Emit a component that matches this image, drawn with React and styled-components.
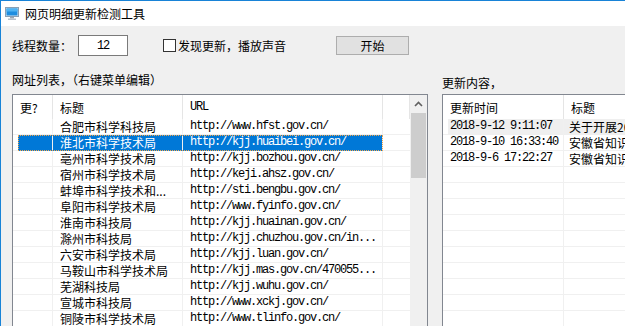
import React from "react";
import styled, { createGlobalStyle } from "styled-components";

const urlRows = [
  ["合肥市科学科技局", "http://www.hfst.gov.cn/"],
  ["淮北市科学技术局", "http://kjj.huaibei.gov.cn/"],
  ["亳州市科学技术局", "http://kjj.bozhou.gov.cn/"],
  ["宿州市科学技术局", "http://keji.ahsz.gov.cn/"],
  ["蚌埠市科学技术和...", "http://sti.bengbu.gov.cn/"],
  ["阜阳市科学技术局", "http://www.fyinfo.gov.cn/"],
  ["淮南市科技局", "http://kjj.huainan.gov.cn/"],
  ["滁州市科技局", "http://kjj.chuzhou.gov.cn/in..."],
  ["六安市科学技术局", "http://kjj.luan.gov.cn/"],
  ["马鞍山市科学技术局", "http://kjj.mas.gov.cn/470055..."],
  ["芜湖科技局", "http://kjj.wuhu.gov.cn/"],
  ["宣城市科技局", "http://www.xckj.gov.cn/"],
  ["铜陵市科学技术局", "http://www.tlinfo.gov.cn/"],
];

const updates = [
  ["2018-9-12 9:11:07", "关于开展2018年度知识产权工作的通知"],
  ["2018-9-10 16:33:40", "安徽省知识产权局关于公布名单的通知"],
  ["2018-9-6 17:22:27", "安徽省知识产权局关于组织申报的通知"],
];

const SELECTED = 1;

export default function App() {
  return (
    <Window>
      <GlobalStyle />
      <TitleBar>
        <svg width="14" height="13" viewBox="0 0 14 13">
          <rect x="0.5" y="0.5" width="13" height="9" fill="#d8e4ee" stroke="#8aa0b4" />
          <rect x="1.5" y="1.5" width="11" height="7" fill="#1e8ee0" />
          <rect x="1.5" y="1.5" width="11" height="3" fill="#4fb3f2" />
          <rect x="5" y="10" width="4" height="1.5" fill="#9aa8b4" />
          <rect x="3" y="11.5" width="8" height="1.5" fill="#b8c2cc" />
        </svg>
        <Title>网页明细更新检测工具</Title>
      </TitleBar>
      <Body>
        <Toolbar>
          <FieldLabel>线程数量：</FieldLabel>
          <NumberBox>12</NumberBox>
          <CheckRow>
            <CheckBox />
            <span>发现更新，播放声音</span>
          </CheckRow>
          <Button>开始</Button>
        </Toolbar>
        <Sections>
          <Section $width={416}>
            <Caption $top={0}>网址列表，（右键菜单编辑）</Caption>
            <Panel>
              <Table>
                <HeaderRow>
                  <HeadCell $w={40}>更?</HeadCell>
                  <HeadCell $w={130}>标题</HeadCell>
                  <HeadCell $w={200} $mono>URL</HeadCell>
                  <HeadCell $w={27} />
                </HeaderRow>
                {urlRows.map(([name, url], i) => (
                  <Row key={i}>
                    <RowBody $sel={i === SELECTED}>
                      <Cell $w={35} />
                      <Cell $w={130} $pad={7}>{name}</Cell>
                      <Cell $w={200} $pad={7} $mono>{url}</Cell>
                    </RowBody>
                  </Row>
                ))}
              </Table>
              <ScrollBar>
                <ArrowButton>
                  <svg width="9" height="6" viewBox="0 0 9 6">
                    <path d="M1 5 L4.5 1.5 L8 5" fill="none" stroke="#606060" strokeWidth="1.6" />
                  </svg>
                </ArrowButton>
                <Thumb />
              </ScrollBar>
            </Panel>
          </Section>
          <Section $width={300}>
            <Caption $top={3}>更新内容，</Caption>
            <Panel>
              <Table>
                <HeaderRow>
                  <HeadCell $w={121}>更新时间</HeadCell>
                  <HeadCell $w={178}>标题</HeadCell>
                </HeaderRow>
                {updates.map(([time, title], i) => (
                  <Row key={i}>
                    <RowBody $dim={i === 0}>
                      <Cell $w={116} $pad={2} $mono>{time}</Cell>
                      <Cell $w={178} $pad={5}>{title}</Cell>
                    </RowBody>
                  </Row>
                ))}
                {Array.from({ length: 10 }).map((_, i) => (
                  <Row key={"e" + i}>
                    <RowBody>
                      <Cell $w={116} />
                      <Cell $w={178} />
                    </RowBody>
                  </Row>
                ))}
              </Table>
            </Panel>
          </Section>
        </Sections>
      </Body>
    </Window>
  );
}

const mono = `font-family: "Liberation Mono", monospace; font-size: 12px; letter-spacing: -1.2px;`;

const GlobalStyle = createGlobalStyle`
  body {
    margin: 0;
    background: #f0f0f0;
    overflow: hidden;
    font-family: "Noto Sans CJK SC", "Noto Sans", sans-serif;
    font-size: 12px;
    color: #000;
  }
`;

const Window = styled.div`
  width: 625px;
  height: 326px;
  box-sizing: border-box;
  border-top: 1px solid #1883d7;
  border-left: 1px solid #1883d7;
  overflow: hidden;
  background: #f0f0f0;
`;

const TitleBar = styled.div`
  height: 25px;
  background: #fff;
  display: flex;
  align-items: center;
  padding-left: 4px;
  gap: 6px;
`;

const Title = styled.div`
  font-size: 12px;
  line-height: 14px;
  margin-top: 1px;
`;

const Body = styled.div`
  padding: 9px 0 0 11px;
`;

const Toolbar = styled.div`
  display: flex;
  align-items: center;
  height: 21px;
`;

const FieldLabel = styled.div`
  width: 66px;
  line-height: 16px;
`;

const NumberBox = styled.div`
  width: 50px;
  height: 21px;
  box-sizing: border-box;
  border: 1px solid #7a7a7a;
  background: #fff;
  display: flex;
  align-items: center;
  justify-content: center;
  ${mono}
`;

const CheckRow = styled.label`
  display: flex;
  align-items: center;
  gap: 2px;
  margin-left: 35px;
  line-height: 16px;
`;

const CheckBox = styled.span`
  width: 13px;
  height: 13px;
  box-sizing: border-box;
  border: 1px solid #333;
  background: #fff;
`;

const Button = styled.div`
  width: 73px;
  height: 19px;
  box-sizing: border-box;
  margin-left: 50px;
  border: 1px solid #adadad;
  background: #e1e1e1;
  display: flex;
  align-items: center;
  justify-content: center;
  line-height: 16px;
`;

const Sections = styled.div`
  display: flex;
  gap: 14px;
  margin-top: 16px;
`;

const Section = styled.div`
  width: ${(p) => p.$width}px;
  flex-shrink: 0;
`;

const Caption = styled.div`
  line-height: 16px;
  padding-top: ${(p) => p.$top}px;
  margin-bottom: ${(p) => 6 - p.$top}px;
`;

const Panel = styled.div`
  height: 240px;
  box-sizing: border-box;
  border: 1px solid #828790;
  background: #fff;
  display: flex;
  overflow: hidden;
`;

const Table = styled.div`
  flex: 1;
  display: flex;
  flex-direction: column;
`;

const HeaderRow = styled.div`
  display: flex;
  height: 24px;
  flex-shrink: 0;
`;

const HeadCell = styled.div`
  width: ${(p) => p.$w}px;
  flex-shrink: 0;
  box-sizing: border-box;
  padding-left: 7px;
  border-right: 1px solid #e5e5e5;
  display: flex;
  align-items: center;
  white-space: nowrap;
  ${(p) => p.$mono && mono}
`;

const Row = styled.div`
  height: 16px;
  flex-shrink: 0;
  box-sizing: border-box;
  border-bottom: 1px solid #f0f0f0;
  display: flex;
`;

const RowBody = styled.div`
  display: flex;
  margin-left: 5px;
  height: 16px;
  margin-bottom: -1px;
  box-sizing: border-box;
  background: ${(p) => (p.$sel ? "#0078d7" : p.$dim ? "#efefef" : "transparent")};
  color: ${(p) => (p.$sel ? "#fff" : "#000")};
  outline: ${(p) => (p.$sel ? "1px dotted #f3a64a" : "none")};
  outline-offset: -1px;
`;

const Cell = styled.div`
  width: ${(p) => p.$w}px;
  flex-shrink: 0;
  box-sizing: border-box;
  padding-left: ${(p) => p.$pad || 0}px;
  border-right: 1px solid #f0f0f0;
  line-height: 15px;
  white-space: nowrap;
  overflow: hidden;
  ${(p) => p.$mono && mono}
`;

const ScrollBar = styled.div`
  width: 17px;
  flex-shrink: 0;
  background: #f0f0f0;
  display: flex;
  flex-direction: column;
  align-items: center;
`;

const ArrowButton = styled.div`
  height: 17px;
  width: 17px;
  display: flex;
  align-items: center;
  justify-content: center;
`;

const Thumb = styled.div`
  width: 15px;
  height: 65px;
  background: #cdcdcd;
  margin-top: 1px;
`;
